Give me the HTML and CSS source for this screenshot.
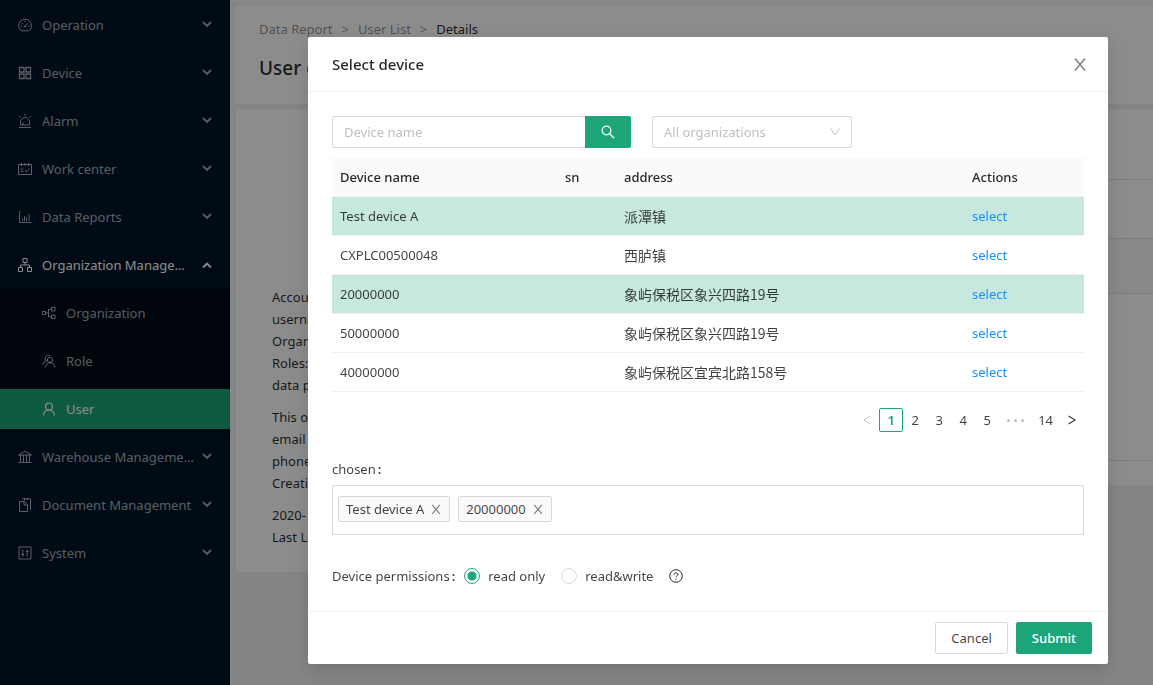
FILE: index.html
```html
<!DOCTYPE html>
<html lang="en">
<head>
  <meta charset="UTF-8">
  <meta name="viewport" content="width=device-width, initial-scale=1.0">
  <title>User details</title>
  <link rel="stylesheet" href="styles.css">
</head>
<body>

  <!-- shared icon shapes -->
  <svg class="sprite" aria-hidden="true">
    <symbol id="i-down" viewBox="0 0 10 10"><path d="M1 2l4 4 4-4" stroke-width="1.8"/></symbol>
    <symbol id="i-up" viewBox="0 0 10 10"><path d="M1 7.5l4-4 4 4" stroke-width="1.8"/></symbol>
    <symbol id="i-close" viewBox="0 0 16 16"><path d="M3 2.5l10 12M13 2.5l-10 12" stroke-width="1.5"/></symbol>
  </svg>

  <div class="layout">
    <!-- sidebar -->
    <nav class="sidebar">
      <a href="#" class="item">
        <svg class="icon" viewBox="0 0 14 14"><path d="M3.2 12.8a6.4 6.4 0 1 1 7.600 0zM7 8.500l2.800-3.300M7 2.500v1.500M2.500 8H4M10 8h1.500M3.800 4.800l1 1"/><circle cx="7" cy="8.500" r=".6"/></svg>
        <span class="label">Operation</span><svg class="arrow"><use href="#i-down"/></svg>
      </a>
      <a href="#" class="item">
        <svg class="icon" viewBox="0 0 14 14"><path d="M1.500 1.500h4.500v4.500h-4.500zM8 1.500h4.500v4.500h-4.500zM1.500 8h4.500v4.500h-4.500zM8 8h4.500v4.500h-4.500z" stroke-width="1.300"/></svg>
        <span class="label">Device</span><svg class="arrow"><use href="#i-down"/></svg>
      </a>
      <a href="#" class="item">
        <svg class="icon" viewBox="0 0 14 14"><path d="M2.500 11V8a4.500 4.500 0 0 1 9 0v3zM1 13.500h12M5 11V8.500M7 0v2M1 2l1.500 1.500M13 2l-1.500 1.500"/></svg>
        <span class="label">Alarm</span><svg class="arrow"><use href="#i-down"/></svg>
      </a>
      <a href="#" class="item">
        <svg class="icon" viewBox="0 0 14 14"><path d="M.5 2.500h13v10H.5zM3.500 1v3M7 1v3M10.500 1v3M2.500 7h3M2.500 9.500h3M7 8l1.800 1.800L11.500 6.500"/></svg>
        <span class="label">Work center</span><svg class="arrow"><use href="#i-down"/></svg>
      </a>
      <a href="#" class="item">
        <svg class="icon" viewBox="0 0 14 14"><path d="M1.500 1v11.500H13M4.500 11V8.500M6.500 11V6M8.500 11V7.500M11 11V4"/></svg>
        <span class="label">Data Reports</span><svg class="arrow"><use href="#i-down"/></svg>
      </a>
      <a href="#" class="item open">
        <svg class="icon" viewBox="0 0 14 14"><path d="M5 .5h4v4H5zM.5 9.500h4v4h-4zM9.500 9.500h4v4h-4zM7 4.500V7M2.500 9.500V7h9v2.500"/></svg>
        <span class="label">Organization Management</span><svg class="arrow"><use href="#i-up"/></svg>
      </a>
      <div class="submenu">
        <a href="#" class="item">
          <svg class="icon" viewBox="0 0 14 14"><path d="M.5 5.500h3v3h-3zM9.500 1.500H13V5H9.500zM9.500 9H13v3.500H9.500zM3.500 7h3M9.500 3.200h-3v7.600h3"/></svg>
          <span class="label">Organization</span>
        </a>
        <a href="#" class="item">
          <svg class="icon" viewBox="0 0 14 14"><circle cx="8" cy="6" r="2.700"/><path d="M3.500 13.500c.3-3 2-4.800 4.500-4.800s4.500 1.800 5 4.800M4.500 7A2.800 2.800 0 1 1 8 1.800M1 11c.3-2.500 1.500-3.500 3.500-4"/></svg>
          <span class="label">Role</span>
        </a>
        <a href="#" class="item active">
          <svg class="icon" viewBox="0 0 14 14"><circle cx="7" cy="4.500" r="3.500" stroke-width="1.200"/><path d="M1.500 13.500C1.800 10 3.800 8 7 8s5.200 2 5.500 5.500" stroke-width="1.200"/></svg>
          <span class="label">User</span>
        </a>
      </div>
      <a href="#" class="item">
        <svg class="icon" viewBox="0 0 14 14"><path d="M.5 5L7 1.200 13.500 5zM2.500 5v7M5.500 5v7M8.500 5v7M11.500 5v7M.5 12.500h13"/></svg>
        <span class="label">Warehouse Management</span><svg class="arrow"><use href="#i-down"/></svg>
      </a>
      <a href="#" class="item">
        <svg class="icon" viewBox="0 0 14 14"><path d="M1.500 3.500h5l3 3v7h-8zM6 3.500V7h3.500M4 .8h8.500V12M6.500 0v2M9.500 0v2"/></svg>
        <span class="label">Document Management</span><svg class="arrow"><use href="#i-down"/></svg>
      </a>
      <a href="#" class="item">
        <svg class="icon" viewBox="0 0 14 14"><path d="M1 1h12v12H1zM4.800 3.500v7M9.200 3.500v7M3.500 8.500h2.600M8 5.500h2.500"/></svg>
        <span class="label">System</span><svg class="arrow"><use href="#i-down"/></svg>
      </a>
    </nav>

    <!-- page content -->
    <main class="content">
      <header class="page-head">
        <div class="breadcrumb">
          <a href="#">Data Report</a><i>&gt;</i><a href="#">User List</a><i>&gt;</i><span>Details</span>
        </div>
        <h1>User details</h1>
      </header>
      <div class="columns">
        <section class="profile">
          <p>Account:<br>username:<br>Organization:<br>Roles:<br>data permissions</p>
          <p>This organization<br>email<br>phone<br>Creation time:</p>
          <p>2020-<br>Last Login:</p>
        </section>
        <section class="detail">
          <div class="detail-tabs"></div>
          <div class="detail-tools"></div>
          <div class="detail-head"></div>
          <div class="detail-rows"></div>
        </section>
      </div>
    </main>
  </div>

  <!-- modal -->
  <div class="mask">
    <div class="modal" role="dialog" aria-labelledby="modalTitle">
      <div class="modal-head">
        <h2 id="modalTitle">Select device</h2>
        <button class="close" type="button" aria-label="Close"><svg><use href="#i-close"/></svg></button>
      </div>

      <div class="modal-body">
        <div class="filters">
          <div class="search">
            <input type="text" placeholder="Device name" aria-label="Device name">
            <button type="button" aria-label="Search">
              <svg viewBox="0 0 14 14"><circle cx="5.500" cy="5.500" r="4.300"/><path d="M8.700 8.700l4.500 4.500"/></svg>
            </button>
          </div>
          <div class="select">
            <select aria-label="Organization"><option>All organizations</option></select>
            <svg viewBox="0 0 12 12"><path d="M1.500 2.500L6 9l4.500-6.500"/></svg>
          </div>
        </div>

        <table>
          <colgroup><col class="c-name"><col class="c-sn"><col><col class="c-actions"></colgroup>
          <thead>
            <tr><th>Device name</th><th>sn</th><th>address</th><th>Actions</th></tr>
          </thead>
          <tbody>
            <tr class="picked"><td>Test device A</td><td></td><td class="address">派潭镇</td><td><a href="#">select</a></td></tr>
            <tr><td>CXPLC00500048</td><td></td><td class="address">西胪镇</td><td><a href="#">select</a></td></tr>
            <tr class="picked"><td>20000000</td><td></td><td class="address">象屿保税区象兴四路19号</td><td><a href="#">select</a></td></tr>
            <tr><td>50000000</td><td></td><td class="address">象屿保税区象兴四路19号</td><td><a href="#">select</a></td></tr>
            <tr><td>40000000</td><td></td><td class="address">象屿保税区宜宾北路158号</td><td><a href="#">select</a></td></tr>
          </tbody>
        </table>

        <div class="pagination">
          <button type="button" disabled aria-label="Previous page"><svg viewBox="0 0 10 10"><path d="M8.500 1L2 5l6.500 4"/></svg></button>
          <button type="button" class="current">1</button>
          <button type="button">2</button>
          <button type="button">3</button>
          <button type="button">4</button>
          <button type="button">5</button>
          <span class="dots"><b></b><b></b><b></b></span>
          <button type="button">14</button>
          <button type="button" aria-label="Next page"><svg viewBox="0 0 10 10"><path d="M1.500 1L8 5 1.500 9" stroke-width="1.300"/></svg></button>
        </div>

        <div class="chosen-title">chosen<span class="colon">:</span></div>
        <div class="chosen">
          <span class="tag">Test device A<button type="button" aria-label="Remove Test device A"><svg><use href="#i-close"/></svg></button></span>
          <span class="tag">20000000<button type="button" aria-label="Remove 20000000"><svg><use href="#i-close"/></svg></button></span>
        </div>

        <div class="permissions">
          <span>Device permissions<span class="colon">:</span></span>
          <label><input type="radio" name="perm" checked>read only</label>
          <label><input type="radio" name="perm">read&amp;write</label>
          <svg class="help" viewBox="0 0 14 14"><circle cx="7" cy="7" r="6.300"/><path d="M5.200 5.600c0-2.400 3.700-2.400 3.700 0 0 1.300-1.900 1.300-1.900 2.700M7 9.500v1.200"/></svg>
        </div>
      </div>

      <div class="modal-foot">
        <button type="button" class="btn">Cancel</button>
        <button type="button" class="btn primary">Submit</button>
      </div>
    </div>
  </div>

</body>
</html>
```
FILE: styles.css
```css
/* ==== Base ==== */
* { box-sizing: border-box; margin: 0; padding: 0; }
html, body { height: 100%; overflow: hidden; }
body {
  font: 13px/22px "Noto Sans", "Noto Sans CJK SC", sans-serif;
  color: rgba(0,0,0,.75);
  background: #f0f2f5;
}
a { color: #1890ff; text-decoration: none; }
button, input, select { font: inherit; color: inherit; }
button { cursor: pointer; border: none; background: none; }
svg { fill: none; stroke: currentColor; display: block; flex: none; }
.sprite { display: none; }

/* ==== Layout ==== */
.layout { display: flex; min-height: 100%; }

/* ==== Sidebar ==== */
.sidebar {
  display: flex; flex-direction: column;
  width: 230px; flex: none; padding-top: 1px; background: #001529;
}
.item {
  display: flex; align-items: center; gap: 10px;
  height: 40px; margin: 4px 0; padding: 0 18px;
  color: rgba(255,255,255,.65);
}
.icon { width: 14px; height: 14px; }
.label { flex: 1; margin-right: -4px; overflow: hidden; text-overflow: ellipsis; white-space: nowrap; }
.arrow { width: 10px; height: 10px; }
.item.open { color: #fff; }
.submenu { display: flex; flex-direction: column; background: #000c17; }
.submenu .item { padding-left: 42px; }
.item.active { background: #1da57a; color: #fff; }

/* ==== Page content ==== */
.content { flex: 1; border-top: 1px solid #fff; padding: 5px 0 0 5px; }
.page-head { height: 98px; padding: 12px 24px; background: #fff; }
.breadcrumb { color: rgba(0,0,0,.45); }
.breadcrumb a { color: inherit; }
.breadcrumb i { margin: 0 9px; font-style: normal; }
.breadcrumb span { color: rgba(0,0,0,.85); }
.page-head h1 { margin-top: 12px; font-size: 19px; line-height: 32px; font-weight: 500; color: rgba(0,0,0,.85); }
.columns { display: flex; align-items: flex-start; gap: 6px; padding: 6px 0 0 1px; }
.profile { width: 280px; padding: 176px 36px 14px; background: #fff; color: rgba(0,0,0,.85); white-space: nowrap; overflow: hidden; }
.profile p { margin-bottom: 10px; }
.detail { flex: 1; background: #fff; padding-bottom: 24px; }
.detail div { border-bottom: 1px solid #e8e8e8; }
.detail-tabs { height: 70px; }
.detail-tools { height: 59px; }
.detail-head { height: 55px; background: #fafafa; }
.detail-rows { height: 167px; }

/* ==== Modal ==== */
.mask {
  position: fixed; inset: 0; padding: 37px 45px 21px 308px;
  background: rgba(0,0,0,.45);
}
.modal {
  background: #fff; border-radius: 2px;
  box-shadow: 0 3px 6px -4px rgba(0,0,0,.12), 0 6px 16px rgba(0,0,0,.08), 0 9px 28px 8px rgba(0,0,0,.05);
}
.modal-head {
  display: flex; align-items: center; justify-content: space-between;
  padding: 16px 20px 16px 24px; border-bottom: 1px solid #f0f0f0;
}
.modal-head h2 { font-size: 15px; line-height: 22px; font-weight: 500; color: rgba(0,0,0,.85); }
.close svg { width: 16px; height: 16px; color: rgba(0,0,0,.5); }
.modal-body { padding: 24px; }

.filters { display: flex; gap: 21px; margin-bottom: 10px; }
.search { display: flex; width: 299px; }
.search input {
  flex: 1; min-width: 0; height: 32px; padding: 0 11px;
  border: 1px solid #d9d9d9; border-right: none; border-radius: 2px 0 0 2px;
}
.search input::placeholder { color: #bfbfbf; }
.search button {
  display: flex; align-items: center; justify-content: center;
  width: 46px; height: 32px; border-radius: 0 2px 2px 0;
  background: #1da57a; color: #fff;
}
.search svg { width: 14px; height: 14px; stroke-width: 1.3; }
.select { position: relative; width: 200px; }
.select select {
  appearance: none; width: 100%; height: 32px; padding: 0 11px;
  border: 1px solid #d9d9d9; border-radius: 2px; background: #fff; color: #bfbfbf;
}
.select svg { position: absolute; right: 11px; top: 10px; width: 12px; height: 12px; color: #bfbfbf; pointer-events: none; }

table { width: 100%; border-collapse: separate; border-spacing: 0; table-layout: fixed; }
.c-name { width: 225px; }
.c-sn { width: 59px; }
.c-actions { width: 120px; }
th, td { height: 39px; padding: 8px; line-height: 22px; text-align: left; border-bottom: 1px solid #f0f0f0; }
th { background: #fafafa; font-weight: 500; color: rgba(0,0,0,.85); }
.picked td { background: #c7e8df; }
.address { font-family: "Noto Sans CJK SC", sans-serif; font-size: 14px; }

.pagination { display: flex; justify-content: flex-end; margin-top: 16px; }
.pagination button {
  display: flex; align-items: center; justify-content: center;
  min-width: 24px; height: 24px; padding: 0 7px; border-radius: 2px;
}
.pagination svg { width: 10px; height: 10px; }
.pagination button:disabled { color: rgba(0,0,0,.25); }
.pagination .current { border: 1px solid #1da57a; color: #1da57a; font-weight: 600; }
.dots { display: flex; align-items: center; justify-content: center; gap: 4px; width: 32px; }
.dots b { width: 3px; height: 3px; border-radius: 50%; background: #bfbfbf; }

.chosen-title { margin: 26px 0 5px; }
.colon { margin: 0 5px 0 2px; font-weight: 600; }
.chosen { display: flex; gap: 8px; height: 50px; padding: 10px 5px; border: 1px solid #d9d9d9; }
.tag {
  display: flex; align-items: center; gap: 6px; height: 26px; padding: 0 7px;
  border: 1px solid #d9d9d9; border-radius: 2px; background: #fafafa;
}
.tag svg { width: 12px; height: 12px; color: rgba(0,0,0,.5); }

.permissions { display: flex; align-items: center; gap: 16px; margin-top: 30px; }
.permissions > span { margin-right: -12px; }
.permissions label { display: flex; align-items: center; gap: 8px; }
.permissions input {
  appearance: none; width: 16px; height: 16px;
  border: 1px solid #d9d9d9; border-radius: 50%; background: #fff;
}
.permissions input:checked { border-color: #1da57a; background: radial-gradient(#1da57a 4px, #fff 5px); }
.help { width: 14px; height: 14px; color: rgba(0,0,0,.85); }

.modal-foot { display: flex; justify-content: flex-end; gap: 8px; padding: 10px 16px; border-top: 1px solid #f0f0f0; }
.btn { height: 32px; padding: 0 15px; border: 1px solid #d9d9d9; border-radius: 2px; background: #fff; }
.btn.primary { border-color: #1da57a; background: #1da57a; color: #fff; font-weight: 500; }
```
